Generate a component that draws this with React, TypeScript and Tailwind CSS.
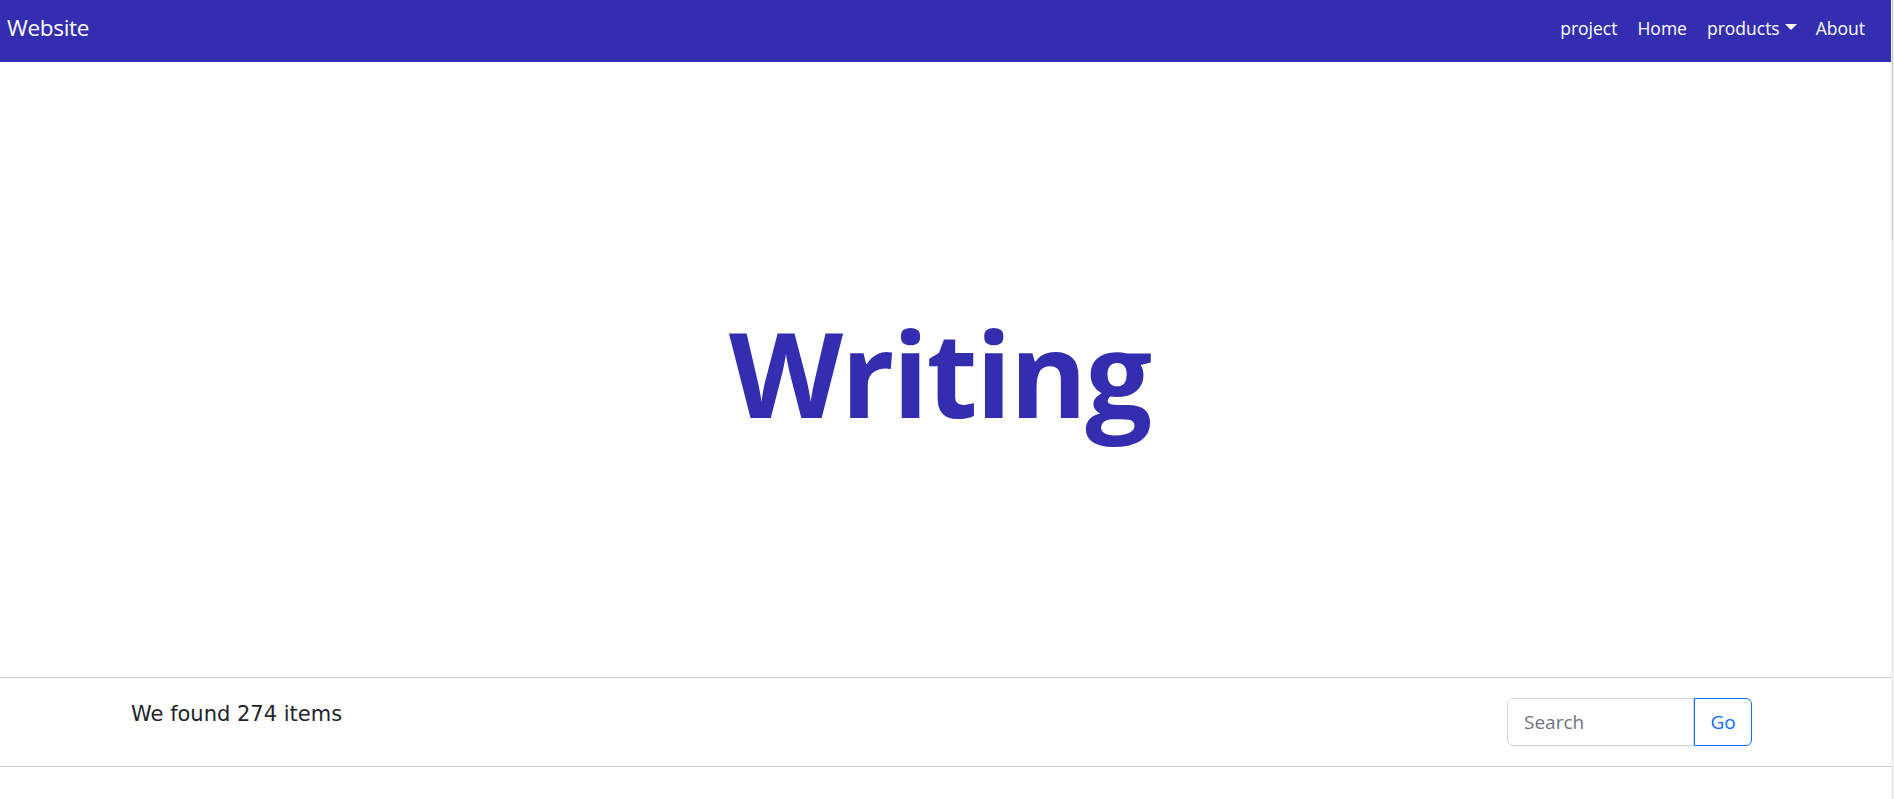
import React from "react";

export default function App() {
  return (
    <div className="flex w-full h-[799px] overflow-hidden bg-white">
      <div className="flex-1 flex flex-col">
        <nav className="h-[62px] shrink-0 bg-[#332db0] flex items-center justify-between pl-[7px] pr-[26px] pb-[6px] font-['Open_Sans',sans-serif] text-white">
          <span className="text-[22.5px] tracking-[-0.3px]">Website</span>
          <div className="flex items-center text-[17.5px]">
            <a className="mr-[20px]">project</a>
            <a className="mr-[20px]">Home</a>
            <a className="mr-[19px] flex items-center">
              products
              <svg width="12" height="7" viewBox="0 0 12 7" className="ml-[5px] mb-[2px]">
                <polygon points="0,0 12,0 6,6" fill="white" />
              </svg>
            </a>
            <a>About</a>
          </div>
        </nav>
        <div className="h-[615px] shrink-0 flex items-center justify-center">
          <h1 className="text-[118px] font-bold text-[#332db0] font-['Open_Sans',sans-serif] tracking-[-2px] leading-none pt-[6px] pr-[12px]">
            Writing
          </h1>
        </div>
        <div className="shrink-0 border-t border-b border-[#cccccc] flex items-start justify-between pl-[131px] pr-[139px] py-[20px]">
          <span className="text-[21px] leading-[32px] text-[#212529] font-['DejaVu_Sans',sans-serif]">We found 274 items</span>
          <div className="flex h-[48px] font-['Open_Sans',sans-serif] text-[19px]">
            <div className="w-[187px] border border-[#ced4da] rounded-l-[6px] flex items-center pl-[16px] text-[#6c757d]">
              Search
            </div>
            <div className="w-[58px] border border-[#0d6efd] rounded-r-[6px] flex items-center justify-center text-[#0d6efd]">
              Go
            </div>
          </div>
        </div>
      </div>
      <div className="w-[3px] bg-[#f0f0f0] flex justify-center">
        <div className="w-[1px] h-[240px] bg-[#c8c8c8]" />
      </div>
    </div>
  );
}
